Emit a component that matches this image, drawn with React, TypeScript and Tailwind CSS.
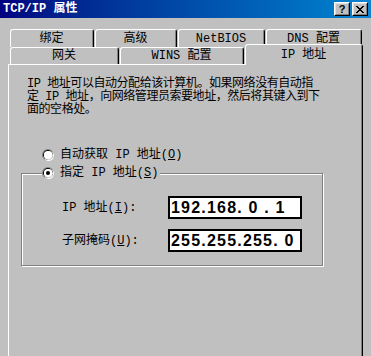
import React from "react";

const ui = "font-['Liberation_Mono','Noto_Sans_CJK_SC',monospace]";

function TitleButton({ children }: { children: React.ReactNode }) {
  return (
    <div className="w-[16px] h-[14px] flex border border-t-white border-l-white border-r-black border-b-black">
      <div className="flex-1 flex items-center justify-center bg-[#c0c0c0] border border-t-[#dfdfdf] border-l-[#dfdfdf] border-r-[#808080] border-b-[#808080]">
        {children}
      </div>
    </div>
  );
}

function CloseGlyph() {
  // classic 8x7 pixel cross
  const px = [
    [0, 0], [1, 0], [6, 0], [7, 0],
    [1, 1], [2, 1], [5, 1], [6, 1],
    [2, 2], [3, 2], [4, 2], [5, 2],
    [3, 3], [4, 3],
    [2, 4], [3, 4], [4, 4], [5, 4],
    [1, 5], [2, 5], [5, 5], [6, 5],
    [0, 6], [1, 6], [6, 6], [7, 6],
  ];
  return (
    <svg width="8" height="7" viewBox="0 0 8 7" shapeRendering="crispEdges">
      {px.map(([x, y]) => (
        <rect key={`${x}-${y}`} x={x} y={y} width="1" height="1" fill="#000" />
      ))}
    </svg>
  );
}

function Radio({ checked }: { checked?: boolean }) {
  return (
    <svg width="12" height="12" viewBox="0 0 12 12" className="shrink-0">
      <circle cx="6" cy="6" r="6" fill="#808080" />
      <circle cx="6.5" cy="6.5" r="5.5" fill="#ffffff" />
      <circle cx="6" cy="6" r="5" fill="#000000" />
      <circle cx="6.5" cy="6.5" r="4.5" fill="#dfdfdf" />
      <circle cx="6" cy="6" r="4" fill="#ffffff" />
      {checked && <circle cx="6" cy="6" r="2" fill="#000000" />}
    </svg>
  );
}

function Tab({ className, children, inner }: { className: string; children: React.ReactNode; inner?: string }) {
  return (
    <div className={`flex ${className}`}>
      <div className="flex-1 rounded-t-[3px] bg-[#c0c0c0] border-l border-t border-r border-l-white border-t-white border-r-black">
        <div className={`h-full border-r border-[#808080] flex justify-center ${inner ?? "items-center"}`}>
          {children}
        </div>
      </div>
    </div>
  );
}

function IpField({ value }: { value: string }) {
  return (
    <div className="w-[134px] h-[23px] border-2 border-black bg-white pl-[1px] whitespace-pre font-['Liberation_Sans',sans-serif] font-bold text-[16px] leading-[19px] tracking-[1.2px]">
      {value}
    </div>
  );
}

export default function App() {
  return (
    <div className={`w-[371px] h-[356px] overflow-hidden bg-[#c0c0c0] text-black text-[12px] leading-[12px] ${ui}`}>
      {/* title bar */}
      <div className="h-[18px] flex items-center justify-between pl-[3px] pr-[3px] bg-linear-to-r from-[#000080] to-[#1084d0]">
        <span className="text-white font-bold">TCP/IP 属性</span>
        <div className="flex gap-[2px]">
          <TitleButton>
            <span className="font-['Liberation_Sans',sans-serif] font-bold text-[11px] leading-[10px]">?</span>
          </TitleButton>
          <TitleButton>
            <CloseGlyph />
          </TitleButton>
        </div>
      </div>

      <div className="pl-[8px] pt-[11px]">
        {/* back row of tabs */}
        <div className="flex gap-[1px] h-[18px] pl-[2px]">
          <Tab className="w-[84px]">绑定</Tab>
          <Tab className="w-[82px]">高级</Tab>
          <Tab className="w-[87px]">NetBIOS</Tab>
          <Tab className="w-[96px]">DNS 配置</Tab>
        </div>
        {/* front row of tabs */}
        <div className="flex gap-[1px] h-[17px] pl-[2px]">
          <Tab className="w-[109px]">网关</Tab>
          <Tab className="w-[124px]">WINS 配置</Tab>
          <Tab className="w-[118px] h-[21px] -mt-[3px] relative z-10" inner="items-start pt-[4px]">
            IP 地址
          </Tab>
        </div>

        {/* panel */}
        <div className="w-[355px] h-[300px] flex border-l border-t border-r border-l-white border-t-white border-r-black">
          <div className="flex-1 border-r border-[#808080] pl-[18px] pt-[13px]">
            <p className="leading-[13px] tracking-[-0.45px]">
              IP 地址可以自动分配给该计算机。如果网络没有自动指
              <br />
              定 IP 地址，向网络管理员索要地址，然后将其键入到下
              <br />
              面的空格处。
            </p>

            <div className="mt-[30px] h-[16px] pl-[15px] flex items-center gap-[6px]">
              <Radio />
              <span>
                自动获取 IP 地址(<span className="underline">O</span>)
              </span>
            </div>

            <fieldset className="mt-[2px] -ml-[6px] w-[294px] border border-[#808080] shadow-[inset_1px_1px_0_#fff,1px_1px_0_#fff] px-[20px] pb-[13px]">
              <legend className="flex items-center gap-[6px] h-[16px] pr-[2px] bg-[#c0c0c0]">
                <Radio checked />
                <span>
                  指定 IP 地址(<span className="underline">S</span>)
                </span>
              </legend>
              <div className="pt-[15px] pl-[20px] flex flex-col gap-[10px]">
                <div className="flex items-center">
                  <span className="w-[106px]">
                    IP 地址(<span className="underline">I</span>):
                  </span>
                  <IpField value="192.168. 0 . 1" />
                </div>
                <div className="flex items-center">
                  <span className="w-[106px]">
                    子网掩码(<span className="underline">U</span>):
                  </span>
                  <IpField value="255.255.255. 0" />
                </div>
              </div>
            </fieldset>
          </div>
        </div>
      </div>
    </div>
  );
}
